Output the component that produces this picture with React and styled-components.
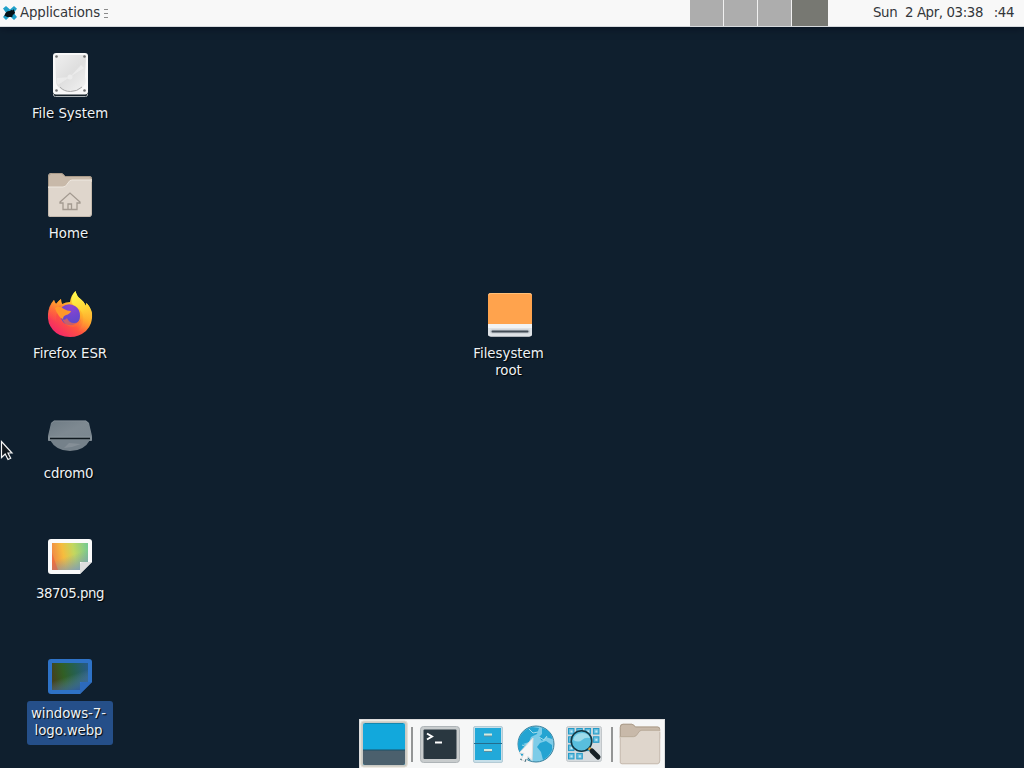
import React from "react";
import styled, { createGlobalStyle } from "styled-components";

const GlobalStyle = createGlobalStyle`
  html, body { margin: 0; padding: 0; overflow: hidden; }
  * { box-sizing: border-box; }
`;

const Screen = styled.div`
  position: relative;
  display: flex;
  flex-direction: column;
  width: 1024px;
  height: 768px;
  overflow: hidden;
  background: #0f1f2e;
  font-family: "DejaVu Sans", sans-serif;
  font-size: 13.33px;
  cursor: default;
`;

const Panel = styled.header`
  display: flex;
  flex: none;
  height: 27px;
  color: #33363a;
  background: #f8f8f8;
  border-bottom: 1px solid #d5d9dc;
  box-shadow: 0 1px 8px rgba(0, 6, 20, 0.5);
`;

const MenuButton = styled.div`
  display: flex;
  align-items: center;
  width: 690px;
  padding-left: 2px;
  white-space: pre;
`;

const MenuLabel = styled.span`
  width: 81px;
  height: 26px;
  margin-left: 2px;
  line-height: 25px;
  letter-spacing: -0.12px;
`;

const Grip = styled.div`
  display: flex;
  flex-direction: column;
  gap: 3px;
  margin-left: 3px;
`;

const GripLine = styled.div`
  width: 4px;
  height: 1px;
  background: #8b8b8b;
`;

const Pager = styled.div`
  display: flex;
  gap: 1px;
  width: 138px;
  height: 26px;
  background: #f1f1f1;
`;

const Workspace = styled.div`
  width: ${(p) => (p.$active ? 36 : 33)}px;
  background: ${(p) => (p.$active ? "#777872" : "#adadad")};
`;

const Clock = styled.div`
  display: flex;
  justify-content: space-between;
  flex: 1;
  padding: 0 10px 0 45px;
  line-height: 25px;
  letter-spacing: -0.38px;
  white-space: pre;
`;

const IconGrid = styled.main`
  display: grid;
  flex: none;
  grid-template-columns: 140px 300px 140px;
  grid-template-rows: repeat(6, 120px);
  padding-top: 24px;
`;

const Launcher = styled.div`
  display: flex;
  flex-direction: column;
  align-items: center;
  grid-column: ${(p) => p.$column};
  grid-row: ${(p) => p.$row};
`;

const Label = styled.div`
  width: 86px;
  min-height: 27px;
  margin-top: 2px;
  padding: 4px ${(p) => p.$inset || 0}px 6px 0;
  border-radius: 3px;
  color: #eef2f5;
  font-size: 13.33px;
  line-height: 17px;
  letter-spacing: ${(p) => p.$tracking || 0}px;
  text-align: center;
  white-space: pre;
  text-shadow: 1px 1px 1px #000;
  background: ${(p) => (p.$selected ? "#254f89" : "transparent")};
`;

const Dock = styled.nav`
  position: absolute;
  bottom: 0;
  left: 359px;
  display: flex;
  align-items: center;
  width: 306px;
  height: 49px;
  background: #f6f7f7;
  border: 1px solid #dcdcdc;
  border-bottom: 0;
`;

const DockItem = styled.div`
  display: flex;
  align-items: center;
  justify-content: center;
  width: 48px;
  height: 48px;
`;

const Separator = styled.div`
  width: 2px;
  height: 35px;
  margin: 0 3px;
  background: #939595;
`;

const Pointer = styled.svg`
  position: absolute;
  left: 0;
  top: 440px;
`;

const Svg48 = ({ size = 48, children }) => (
  <svg width={size} height={size} viewBox="0 0 48 48">{children}</svg>
);

function MouseLogo() {
  return (
    <svg width="16" height="16" viewBox="0 0 16 16">
      <path d="M1 3.5 4 1l4 3.6L12 1l3 2.7-3.4 4L15 12l-3 3-4-3.7L4 15l-3-3 3.2-4z" fill="#20a0c9" />
      <path d="M2.500 10.500c.5-3 2.700-4.800 5.600-4.500l1-1.300 1.200.9 1.500-1.300.5 1.900.8 1.500-1 1.500-1.300.6-.5 2.200H5l-1.300-1-1 .5z" fill="#061217" />
    </svg>
  );
}

function DriveIcon() {
  return (
    <Svg48>
      <defs>
        <linearGradient id="drive" x2=".8" y2="1">
          <stop stopColor="#efefef" /><stop offset=".55" stopColor="#dfdfdf" /><stop offset="1" stopColor="#efefef" />
        </linearGradient>
      </defs>
      <rect x="7" y="3" width="35" height="43" rx="3" fill="#17222a" />
      <path d="M7.500 43v1q0 1.500 2 1.500h30q2 0 2-1.500v-1" fill="none" stroke="#a9b0b4" />
      <rect x="7" y="2" width="35" height="41.500" rx="3" fill="#f8f8f8" />
      <path d="M11 4h27q2 0 2 2l-1 20q2 6-2 10-5 5-12.500 5-8 0-12-5-3-3-2.500-8L9 6q0-2 2-2z" fill="url(#drive)" />
      <path d="M14 36q4 4.500 10.500 4.500T36 36" fill="none" stroke="#aaa" />
      <path d="M24 26 12 34q-2-3-1-7zM24 26l11-12 3 3z" fill="#fff" opacity=".35" />
      <circle cx="24" cy="26" r="2.500" fill="#ececec" />
      {[[10.5, 5.5], [38.5, 5.5], [10.5, 39.5], [38.5, 39.5]].map(([x, y]) => (
        <circle key={`${x}-${y}`} cx={x} cy={y} r="1.3" fill="#707070" />
      ))}
    </Svg48>
  );
}

function FolderIcon({ home, size }) {
  return (
    <Svg48 size={size}>
      <path d="M2 6q0-4 3-4h10q2 0 4 3h24q3 0 3 3v10H2z" fill="#c8b9a9" />
      <path d="M2.500 17V6q0-3.500 3-3.500H15q2 0 4 3h24q2.500 0 2.500 2.500" fill="none" stroke="#a99a89" />
      <path d="M2 16h15q3 0 5-4 1.500-3 4-3h18q2 0 2 2v31q0 4-3 4H4q-2 0-2-2z" fill="#dfd6cc" />
      <path d="M2 16h15q3 0 5-4 1.500-3 4-3h20" fill="none" stroke={home ? "#eee7df" : "#b6a796"} />
      <path d="M2.500 17v27q0 1.500 2 1.500H43q2.500 0 2.500-3V11" fill="none" stroke="#b8aca0" opacity=".7" />
      {home && (
        <path d="m14 31 10-9 10 9v1h-3v6.500H17V32h-3zM22 38v-5h3.500v5" fill="none" stroke="#a39a90" strokeWidth="1.300" />
      )}
    </Svg48>
  );
}

function FirefoxIcon() {
  return (
    <Svg48>
      <defs>
        <linearGradient id="fox" x1=".88" y1=".15" x2=".25" y2=".95">
          <stop stopColor="#fff04a" /><stop offset=".35" stopColor="#ffb32a" /><stop offset=".65" stopColor="#ff5540" /><stop offset="1" stopColor="#f42a66" />
        </linearGradient>
        <linearGradient id="tail" x1=".4" x2=".6" y2="1">
          <stop stopColor="#fff94d" /><stop offset=".45" stopColor="#ffd536" /><stop offset="1" stopColor="#ff8b30" stopOpacity="0" />
        </linearGradient>
        <linearGradient id="ear" x1=".3" x2=".1" y2="1">
          <stop stopColor="#ffa52c" /><stop offset="1" stopColor="#fe583e" stopOpacity="0" />
        </linearGradient>
        <radialGradient id="globe" cx=".55" cy=".1" r=".9">
          <stop stopColor="#9145ce" /><stop offset=".5" stopColor="#7246cf" /><stop offset="1" stopColor="#574bc9" />
        </radialGradient>
      </defs>
      <path d="M8 9q.5 2 2 4 2.500-3 5-5 0 3 1 5 4-2 8-2 1-7 5.500-11 1 5 5 8 4 3 5.500 7l.3-3Q44 15 46 22q1 11-6 18-7 6-16 6Q13 46 7 39 1 32 2 23 3 15 8 9z" fill="url(#fox)" />
      <path d="M29.500 0q1 5 5 8 4 3 5.500 7l.3-3Q44 15 46 22q1 9-4 15-5 4-10 3 7-8 5-16-2-6-9-9-6-6 1.500-15z" fill="url(#tail)" />
      <path d="M8 9q.5 2 2 4 2.500-3 5-5 0 3 1 5-5 2-4 7-3 5-1 11-6-2-9-7 0-9 6-15z" fill="url(#ear)" />
      <path d="M16 16q6-5 13-1 5 3 5 10 0 6-5 8-5 3-11-1-4-4-3-9-1-4 1-7z" fill="url(#globe)" />
      <path d="M9 17q4-3 9 1 3 2 7 2-1 3-5 4-3 1-3 4-2 0-4-3-3-4-4-8z" fill="#ff982b" />
      <path d="M16 28q3 2 5-1 2 5 7 5 5 0 7-4-1 7-8 8-7 0-11-8z" fill="#ff6a37" opacity=".65" />
    </Svg48>
  );
}

function OpticalIcon() {
  return (
    <Svg48>
      <defs>
        <linearGradient id="optic" x2="1" y2="1"><stop stopColor="#6e7b84" /><stop offset=".5" stopColor="#7e8991" /><stop offset="1" stopColor="#7b8790" /></linearGradient>
      </defs>
      <path d="m5 12 3-2.500h32L43 12l3 13v4q0 1-1 1H3q-1 0-1-1v-4z" fill="url(#optic)" />
      <path d="m5.500 12 3-2h31l3 2" fill="none" stroke="#909aa1" opacity=".5" />
      <path d="M3 29.500V26h42v3.500" fill="none" stroke="#89949b" />
      <path d="M4 29h40Q38 40 24 40T4 29z" fill="#75818a" />
      <path d="M4 27.500h40" stroke="#10191f" strokeWidth="1.500" />
      <path d="m18 37 5-5 12 1-9 3z" fill="#a2a9ae" opacity=".35" />
    </Svg48>
  );
}

function ImageIcon({ selected }) {
  const id = selected ? "dark" : "light";
  const c = selected
    ? ["#43421f", "#315f24", "#26604c", "#275b86"]
    : ["#f08b43", "#f5bd3e", "#c3d75f", "#77ca91"];
  return (
    <Svg48>
      <defs>
        <linearGradient id={`${id}-across`} y1=".35" x2="1" y2=".2">
          <stop stopColor={c[0]} /><stop offset=".3" stopColor={c[1]} /><stop offset=".6" stopColor={c[2]} /><stop offset="1" stopColor={c[3]} />
        </linearGradient>
        <linearGradient id={`${id}-down`} x1=".45" x2=".9" y2="1">
          <stop offset=".4" stopColor="#6f94ad" stopOpacity="0" /><stop offset="1" stopColor={selected ? "#2855a0" : "#819dbb"} />
        </linearGradient>
      </defs>
      <path d="M5 8h38q3 0 3 3v20L34 43H5q-3 0-3-3V11q0-3 3-3z" fill={selected ? "#2e72c6" : "#fafafa"} />
      <path d="M6 12h36v19h-8v8H6z" fill={`url(#${id}-across)`} />
      <path d="M6 12h36v19h-8v8H6z" fill={`url(#${id}-down)`} />
      {!selected && <path d="M6 22 12 39H6z" fill="#e8563f" opacity=".5" />}
      <path d="M34 43v-9q0-3 3-3h9z" fill={selected ? "#2d6abb" : "#dedede"} />
    </Svg48>
  );
}

function RemovableIcon() {
  return (
    <Svg48>
      <rect x="2" y="2" width="44" height="43.500" rx="3" fill="#f2f3f4" />
      <path d="M2 33V5q0-3 3-3h38q3 0 3 3v28z" fill="#ffa34d" />
      <path d="M3 3.500Q4 2.500 6 2.500h36q2 0 3 1" fill="none" stroke="#ffc078" />
      <path d="M2 37v6q0 2.500 3 2.500h38q3 0 3-2.500v-6z" fill="#dfe2e6" />
      <path d="M6 40.500h36" stroke="#c5cad0" strokeWidth="4" strokeLinecap="round" />
      <path d="M6.500 40.500h35" stroke="#444d56" strokeWidth="2" strokeLinecap="round" />
    </Svg48>
  );
}

function DesktopIcon() {
  return (
    <Svg48>
      <rect x=".8" y="1" width="46.500" height="46" rx="3" fill="#c9cac5" stroke="#e4ded1" />
      <rect x="3" y="3" width="42" height="42" rx="2" fill="#12a8dc" />
      <path d="M3 30h42v13q0 2-2 2H5q-2 0-2-2z" fill="#4b606d" />
      <path d="M3 30h42" stroke="#1a5068" />
      <path d="M5 3.500h38" stroke="#1388af" />
    </Svg48>
  );
}

function TerminalIcon() {
  return (
    <Svg48>
      <rect x="4.500" y="6.500" width="39" height="36" rx="3" fill="#c8cccd" stroke="#aeb4b7" />
      <rect x="7.500" y="9.500" width="33" height="29.500" rx="1" fill="#293740" />
      <path d="m11 13.500 5 3-5 3M19 22.500h7" fill="none" stroke="#fff" strokeWidth="2" />
    </Svg48>
  );
}

function CabinetIcon() {
  return (
    <Svg48>
      <rect x="9.500" y="6.500" width="29" height="36" rx="1.500" fill="#c7dfe9" stroke="#b4cbd5" />
      <rect x="11" y="8" width="26" height="15" fill="#22a9d9" />
      <rect x="11" y="24" width="26" height="16" fill="#22a9d9" />
      <path d="M10 23.500h28" stroke="#246d8d" />
      <path d="M20 15.500h8M20 31h8" stroke="#5c8e9e" strokeWidth="2" />
      <path d="M20 14.500h8M20 30h8" stroke="#d5eadf" strokeWidth="2" />
    </Svg48>
  );
}

function WebIcon() {
  return (
    <Svg48>
      <circle cx="24" cy="24" r="18" fill="#7ecce8" stroke="#387f9b" />
      <path d="M9 15q4-6 11-8l7 1-2 6-6 3-2 5-6 2 6 3-1 6-5 5Q4 29 7 19z" fill="#24a4d2" />
      <path d="m30 8 5 2q5 4 5 9l-6-2-4 4-3-4 3-3zM28 23l6-2 6 4v5q-3 7-9 10l-2-8-4-5z" fill="#24a4d2" />
      <path d="m17 9 4 4 5-1m1 5 5 3 3-4M10 25l8 3" fill="none" stroke="#a1dcea" />
      <path d="m21 18-14 15 5 .5-3 6 5 2 2-5 4 4z" fill="#f6f6f6" stroke="#ddd" />
      <path d="m8 39 2 1m3 2 1-3m2-1 2 2" stroke="#4a7685" />
    </Svg48>
  );
}

function SearchIcon() {
  const tiles = [];
  for (let y = 0; y < 4; y += 1) {
    for (let x = 0; x < 4; x += 1) {
      if (!(x > 1 && y > 2) && !(x === 3 && y > 1)) tiles.push([x, y]);
    }
  }
  return (
    <Svg48>
      <rect x="6.500" y="6.500" width="35" height="35" rx="2" fill="#d7dcdf" stroke="#c2c7ca" />
      {tiles.map(([x, y]) => (
        <React.Fragment key={`${x}-${y}`}>
          <rect x={8.5 + x * 8.3} y={8.5 + y * 8.3} width="5.500" height="5.500" fill="#68bedf" stroke="#249bc7" />
          <rect x={10.5 + x * 8.3} y={10.5 + y * 8.3} width="2" height="2" fill="#c4eaf4" />
        </React.Fragment>
      ))}
      <circle cx="21.500" cy="21" r="10.300" fill="#59bedd" stroke="#123642" strokeWidth="1.600" />
      <path d="M13 20q2-7 9-7 6 0 8 5-5-1-8 2t-9 0z" fill="#9edbea" />
      <path d="m29 28 3 3" stroke="#e3a034" strokeWidth="3" />
      <path d="m32 31 6 6" stroke="#172126" strokeWidth="5" strokeLinecap="round" />
    </Svg48>
  );
}

const launchers = [
  { label: "File System", icon: <DriveIcon />, row: 1 },
  { label: "Home", icon: <FolderIcon home />, row: 2, inset: 3 },
  { label: "Firefox ESR", icon: <FirefoxIcon />, row: 3, tracking: -0.04 },
  { label: "cdrom0", icon: <OpticalIcon />, row: 4, inset: 3, tracking: -0.18 },
  { label: "38705.png", icon: <ImageIcon />, row: 5, tracking: -0.45 },
  { label: "windows-7-\nlogo.webp", icon: <ImageIcon selected />, row: 6, inset: 3, tracking: -0.07, selected: true },
  { label: "Filesystem\nroot", icon: <RemovableIcon />, row: 3, column: 3, inset: 3 },
];

export default function App() {
  return (
    <>
      <GlobalStyle />
      <Screen>
        <Panel>
          <MenuButton>
            <MouseLogo />
            <MenuLabel>Applications</MenuLabel>
            <Grip><GripLine /><GripLine /><GripLine /></Grip>
          </MenuButton>
          <Pager>
            <Workspace /><Workspace /><Workspace /><Workspace $active />
          </Pager>
          <Clock><span>Sun  2 Apr, 03:38</span><span>:44</span></Clock>
        </Panel>
        <IconGrid>
          {launchers.map(({ label, icon, row, column = 1, inset, tracking, selected }) => (
            <Launcher key={label} $row={row} $column={column}>
              {icon}
              <Label $inset={inset} $tracking={tracking} $selected={selected}>{label}</Label>
            </Launcher>
          ))}
        </IconGrid>
        <Dock>
          <DockItem><DesktopIcon /></DockItem>
          <Separator />
          <DockItem><TerminalIcon /></DockItem>
          <DockItem><CabinetIcon /></DockItem>
          <DockItem><WebIcon /></DockItem>
          <DockItem><SearchIcon /></DockItem>
          <Separator />
          <DockItem><FolderIcon size={44} /></DockItem>
        </Dock>
        <Pointer width="14" height="22" viewBox="0 0 14 22">
          <path d="M1.500 1.500v16l3.700-3.500 2.800 5.500 2.700-1.300-2.700-5.200h4z" fill="#10171d" stroke="#f5f5f5" strokeWidth="1.200" />
        </Pointer>
      </Screen>
    </>
  );
}
